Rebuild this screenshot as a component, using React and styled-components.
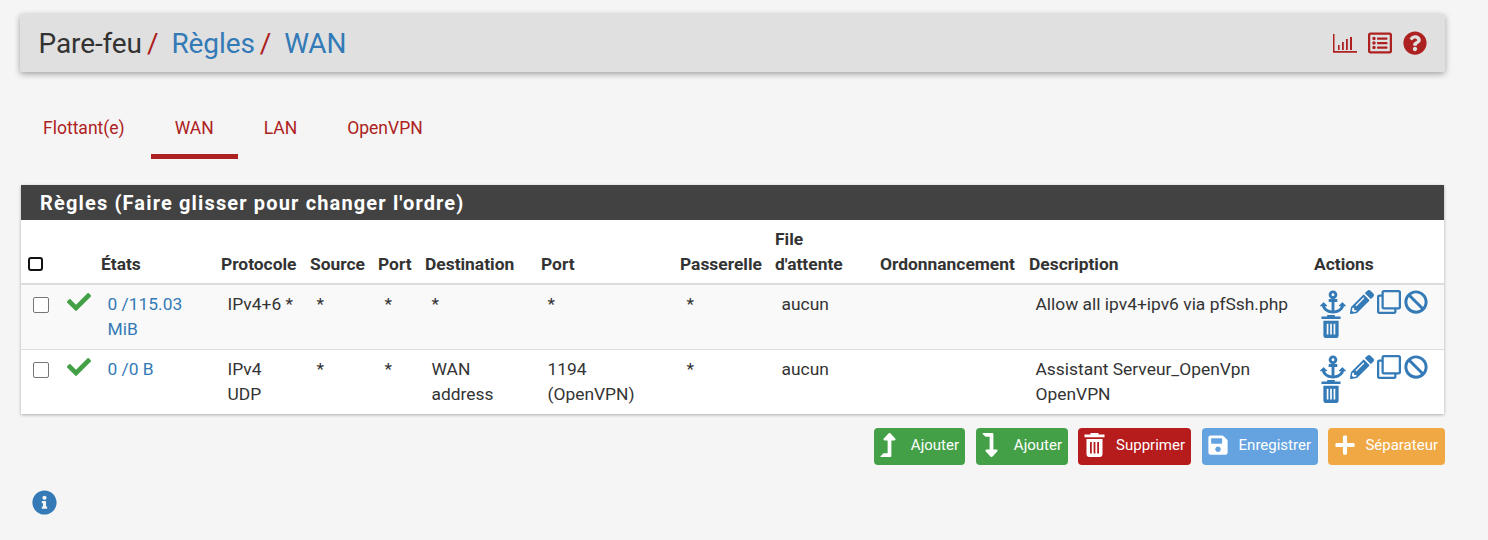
import React from "react";
import styled, { createGlobalStyle } from "styled-components";
import {
  FaAnchor,
  FaPencilAlt,
  FaRegClone,
  FaBan,
  FaCheck,
  FaQuestionCircle,
  FaInfoCircle,
  FaRegListAlt,
  FaLevelUpAlt,
  FaLevelDownAlt,
  FaSave,
  FaPlus,
} from "react-icons/fa";

const Global = createGlobalStyle`
  html, body { margin: 0; padding: 0; }
  body {
    background: #f5f5f5;
    font-family: Roboto, "Liberation Sans", sans-serif;
    color: #333;
  }
`;

const Page = styled.div`
  width: 1488px;
  height: 540px;
  overflow: hidden;
  padding: 14px 43px 0 20px;
  box-sizing: border-box;
`;

const Header = styled.header`
  display: flex;
  align-items: center;
  justify-content: space-between;
  height: 58px;
  width: 1425px;
  background: #e0e0e0;
  border-radius: 2px;
  padding: 0 18px 0 18.5px;
  box-sizing: border-box;
  box-shadow: 0 2px 6px rgba(0, 0, 0, 0.35);
`;

const Crumbs = styled.h1`
  margin: 0;
  padding-top: 1px;
  font-size: 28px;
  font-weight: 400;
  line-height: 32px;
  color: #333;
  letter-spacing: -0.1px;
`;

const Slash = styled.span`
  color: #ad2121;
  margin: 0 13px 0 5px;
`;

const Crumb = styled.span`
  color: #337ab7;
`;

const HeaderIcons = styled.div`
  display: flex;
  align-items: center;
  gap: 11px;
  color: #ad2121;
  font-size: 24px;
`;

const Tabs = styled.nav`
  display: flex;
  gap: 2px;
  margin: 29px 0 26px -1px;
`;

const Tab = styled.a`
  height: 58px;
  padding: 0 24px;
  box-sizing: border-box;
  display: flex;
  align-items: center;
  font-size: 17.5px;
  color: #ad2121;
  border-bottom: 5px solid ${(p) => (p.$active ? "#ad2121" : "transparent")};
`;

const Panel = styled.section`
  width: 1423px;
  margin-left: 1px;
  background: #fff;
  box-shadow: 0 1px 3px rgba(0, 0, 0, 0.3);
`;

const PanelTitle = styled.h2`
  margin: 0;
  height: 35px;
  line-height: 36px;
  padding-left: 19px;
  background: #424242;
  color: #fff;
  font-size: 20px;
  font-weight: 700;
  letter-spacing: 1.15px;
`;

const Table = styled.table`
  width: 1423px;
  table-layout: fixed;
  border-collapse: collapse;
  font-size: 17.4px;
`;

const Th = styled.th`
  text-align: left;
  vertical-align: bottom;
  font-size: 17.4px;
  font-weight: 700;
  line-height: 25px;
  color: #333;
  padding: 7px 0 6px 6px;
  border-bottom: 2px solid #ddd;
  white-space: pre-line;
`;

const BoxHead = styled(Th)`
  padding-left: 7px;
  padding-bottom: 12px;
`;

const HeadBox = styled.span`
  display: block;
  width: 11px;
  height: 10px;
  border: 2px solid #111;
  border-radius: 3px;
  background: #fff;
`;

const Row = styled.tr`
  background: ${(p) => (p.$odd ? "#f9f9f9" : "#fff")};
  & td {
    border-top: 1px solid #ddd;
  }
`;

const Td = styled.td`
  vertical-align: top;
  line-height: 25px;
  padding: 7px 8px 7px 12.5px;
  color: #333;
`;

const BoxCell = styled(Td)`
  padding: 12px 0 0 12px;
`;

const RowBox = styled.span`
  display: block;
  width: 14px;
  height: 14px;
  border: 1px solid #767676;
  border-radius: 2px;
  background: #fff;
`;

const CheckCell = styled(Td)`
  padding: 5px 0 0 7px;
  color: #43a047;
  font-size: 24px;
  line-height: 0;
`;

const Link = styled.a`
  color: #337ab7;
`;

const ActionCell = styled(Td)`
  padding: 4px 0 0 12px;
  color: #337ab7;
  line-height: 0;
`;

const ActionIcons = styled.div`
  display: flex;
  flex-wrap: wrap;
  align-items: center;
  width: 112px;
  font-size: 24px;
  column-gap: 3px;
`;

const Anchor = styled(FaAnchor)`
  font-size: 26px;
  margin-right: 1px;
`;

const Footer = styled.div`
  display: flex;
  justify-content: flex-end;
  gap: 10px;
  margin-top: 14px;
  width: 1425px;
  & > :nth-child(1),
  & > :nth-child(3) {
    margin-right: 1px;
  }
`;

const Button = styled.button`
  display: flex;
  align-items: center;
  justify-content: space-between;
  height: 37px;
  width: ${(p) => p.$w}px;
  padding: 0 ${(p) => p.$right || 6}px 3px ${(p) => p.$pad}px;
  box-sizing: border-box;
  border: 0;
  border-radius: 4px;
  background: ${(p) => p.$bg};
  color: #fff;
  font-family: inherit;
  font-size: 15px;
  font-weight: 400;
  & svg {
    font-size: ${(p) => p.$icon || 24}px;
    flex: none;
  }
`;

const Info = styled.div`
  margin: 25px 0 0 12px;
  color: #337ab7;
  font-size: 25px;
  line-height: 0;
`;

// fa-bar-chart look: thin axes with four bars
const ChartIcon = () => (
  <svg width="24" height="19" viewBox="0 0 24 19" fill="currentColor">
    <path d="M0 0h1.5v17H24v1.8H0z" />
    <path d="M5 11h1.6v5H5zM9 8h1.8v8H9zM13 5h1.8v11H13zM17 3h2v13h-2z" />
  </svg>
);

// flat lid trash can, react-icons has none with this shape
const TrashIcon = ({ className }) => (
  <svg className={className} width="21" height="24" viewBox="0 0 21 24" fill="currentColor" fillRule="evenodd">
    <path d="M6.5 0h8v1.6h6v2.6H.5V1.6h6z" />
    <path d="M2.5 6h16v15.6a2.4 2.4 0 0 1-2.4 2.4H4.9a2.4 2.4 0 0 1-2.4-2.4zM6 9v11.5h1.8V9zM9.6 9v11.5h1.8V9zM13.2 9v11.5H15V9z" />
  </svg>
);

const RowTrash = styled(TrashIcon)`
  width: 20px;
  height: 23px;
  margin-left: 1px;
`;

const rules = [
  {
    states: "0 /115.03 MiB",
    proto: "IPv4+6 *",
    dest: "*",
    port: "*",
    desc: "Allow all ipv4+ipv6 via pfSsh.php",
    odd: true,
  },
  {
    states: "0 /0 B",
    proto: "IPv4 UDP",
    dest: "WAN address",
    port: "1194 (OpenVPN)",
    desc: "Assistant Serveur_OpenVpn OpenVPN",
  },
];

const widths = [39, 35, 120, 89, 68, 47, 116, 139, 95, 105, 149, 285, 136];

function App() {
  return (
    <Page>
      <Global />
      <Header>
        <Crumbs>
          Pare-feu<Slash>/</Slash>
          <Crumb>Règles</Crumb>
          <Slash>/</Slash>
          <Crumb>WAN</Crumb>
        </Crumbs>
        <HeaderIcons>
          <ChartIcon />
          <FaRegListAlt />
          <FaQuestionCircle />
        </HeaderIcons>
      </Header>

      <Tabs>
        <Tab>Flottant(e)</Tab>
        <Tab $active>WAN</Tab>
        <Tab>LAN</Tab>
        <Tab>OpenVPN</Tab>
      </Tabs>

      <Panel>
        <PanelTitle>Règles (Faire glisser pour changer l'ordre)</PanelTitle>
        <Table>
          <colgroup>
            {widths.map((w, i) => (
              <col key={i} style={{ width: w }} />
            ))}
          </colgroup>
          <thead>
            <tr>
              <BoxHead>
                <HeadBox />
              </BoxHead>
              <Th />
              <Th>États</Th>
              <Th>Protocole</Th>
              <Th>Source</Th>
              <Th>Port</Th>
              <Th>Destination</Th>
              <Th>Port</Th>
              <Th>Passerelle</Th>
              <Th>{"File\nd'attente"}</Th>
              <Th>Ordonnancement</Th>
              <Th>Description</Th>
              <Th>Actions</Th>
            </tr>
          </thead>
          <tbody>
            {rules.map((r) => (
              <Row key={r.states} $odd={r.odd}>
                <BoxCell>
                  <RowBox />
                </BoxCell>
                <CheckCell>
                  <FaCheck />
                </CheckCell>
                <Td>
                  <Link>{r.states}</Link>
                </Td>
                <Td>{r.proto}</Td>
                <Td>*</Td>
                <Td>*</Td>
                <Td>{r.dest}</Td>
                <Td>{r.port}</Td>
                <Td>*</Td>
                <Td>aucun</Td>
                <Td />
                <Td>{r.desc}</Td>
                <ActionCell>
                  <ActionIcons>
                    <Anchor />
                    <FaPencilAlt />
                    <FaRegClone />
                    <FaBan />
                    <RowTrash />
                  </ActionIcons>
                </ActionCell>
              </Row>
            ))}
          </tbody>
        </Table>
      </Panel>

      <Footer>
        <Button $w={91} $bg="#43a047" $pad={2}>
          <FaLevelUpAlt />
          Ajouter
        </Button>
        <Button $w={92} $bg="#43a047" $pad={2}>
          <FaLevelDownAlt />
          Ajouter
        </Button>
        <Button $w={113} $bg="#b71c1c" $pad={6}>
          <TrashIcon />
          Supprimer
        </Button>
        <Button $w={116} $bg="#64a3e0" $pad={5} $right={7} $icon={22}>
          <FaSave />
          Enregistrer
        </Button>
        <Button $w={117} $bg="#efa844" $pad={6} $right={7} $icon={22}>
          <FaPlus />
          Séparateur
        </Button>
      </Footer>

      <Info>
        <FaInfoCircle />
      </Info>
    </Page>
  );
}

export default App;
